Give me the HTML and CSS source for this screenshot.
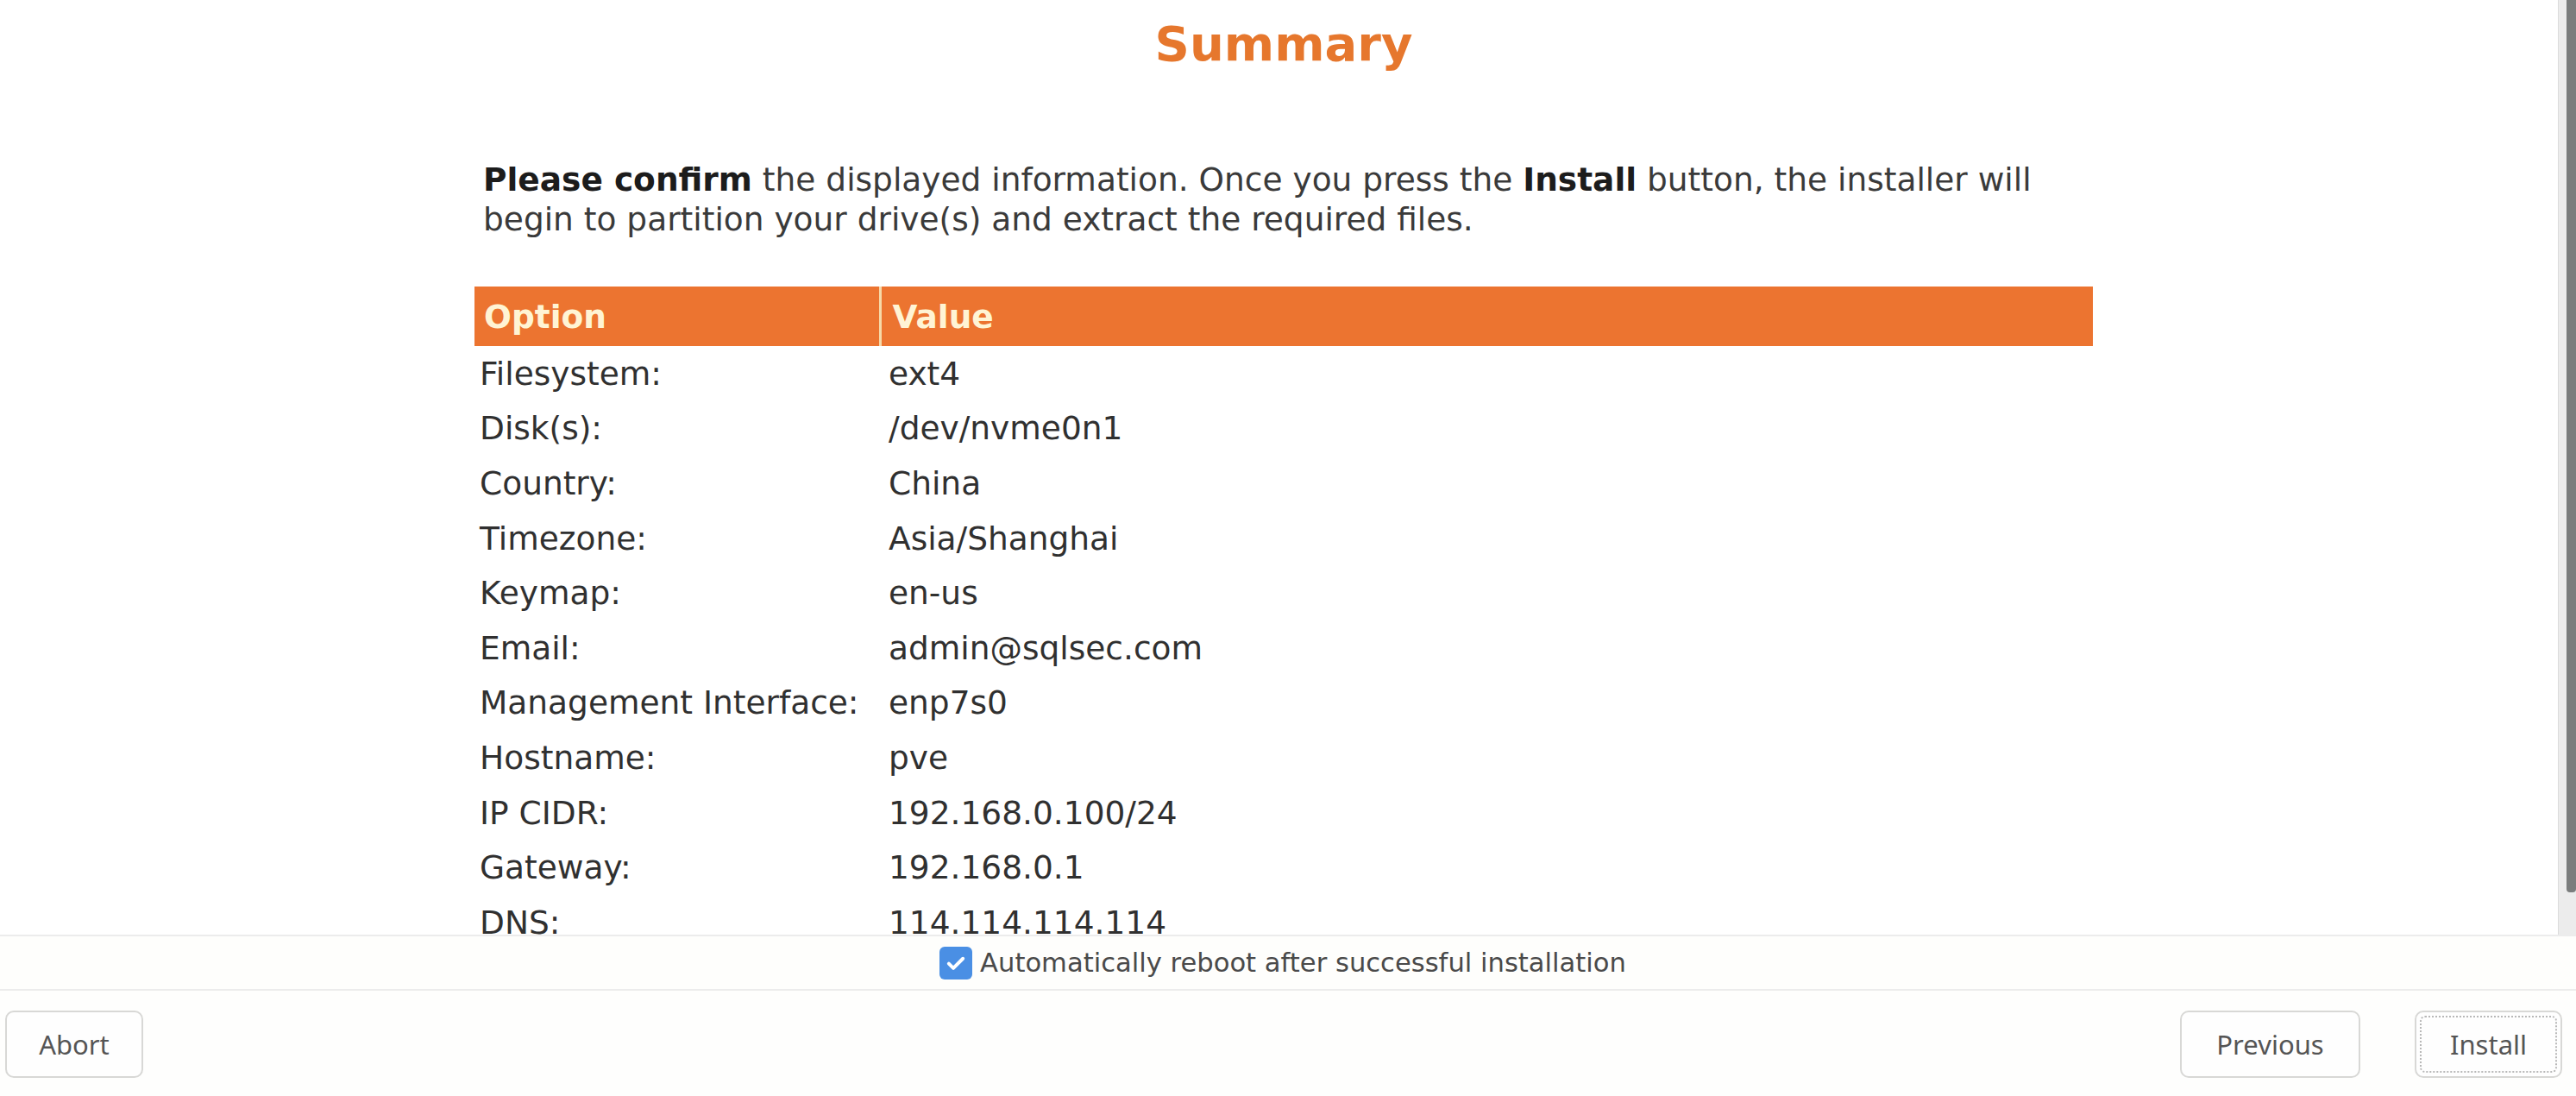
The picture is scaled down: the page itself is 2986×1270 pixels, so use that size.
FILE: index.html
```html
<!DOCTYPE html>
<html lang="en">
<head>
<meta charset="utf-8">
<title>Summary</title>
<link rel="stylesheet" href="styles.css">
</head>
<body>
<div class="page">
  <div class="scroll-area">
    <main class="content">
      <h1 class="title">Summary</h1>
      <div class="inner">
        <p class="intro"><b>Please confirm</b> the displayed information. Once you press the <b>Install</b> button, the installer will begin to partition your drive(s) and extract the required files.</p>
        <table class="summary">
          <thead>
            <tr><th class="col-opt">Option</th><th class="col-val">Value</th></tr>
          </thead>
          <tbody>
            <tr><td>Filesystem:</td><td class="val">ext4</td></tr>
            <tr><td>Disk(s):</td><td class="val">/dev/nvme0n1</td></tr>
            <tr><td>Country:</td><td class="val">China</td></tr>
            <tr><td>Timezone:</td><td class="val">Asia/Shanghai</td></tr>
            <tr><td>Keymap:</td><td class="val">en-us</td></tr>
            <tr><td>Email:</td><td class="val">admin@sqlsec.com</td></tr>
            <tr><td>Management Interface:</td><td class="val">enp7s0</td></tr>
            <tr><td>Hostname:</td><td class="val">pve</td></tr>
            <tr><td>IP CIDR:</td><td class="val">192.168.0.100/24</td></tr>
            <tr><td>Gateway:</td><td class="val">192.168.0.1</td></tr>
            <tr><td>DNS:</td><td class="val">114.114.114.114</td></tr>
          </tbody>
        </table>
      </div>
    </main>
    <div class="scrollbar"><div class="thumb"></div></div>
  </div>
  <div class="check-bar">
    <label class="check">
      <span class="box"><svg viewBox="0 0 24 24" width="28" height="28"><path d="M5 12.5l4.5 4.5L19 7.5" fill="none" stroke="#fff" stroke-width="3.4" stroke-linecap="round" stroke-linejoin="round"/></svg></span>
      <span class="check-label">Automatically reboot after successful installation</span>
    </label>
  </div>
  <div class="button-bar">
    <button class="btn btn-abort">Abort</button>
    <div class="btn-group">
      <button class="btn btn-prev">Previous</button>
      <button class="btn btn-install"><span class="focus">Install</span></button>
    </div>
  </div>
</div>
</body>
</html>
```

FILE: styles.css
```css
* { box-sizing: border-box; }
html, body { margin: 0; padding: 0; background: #ffffff; }
body { font-family: "DejaVu Sans", "Liberation Sans", sans-serif; color: #333333; }

.page {
  width: 2986px;
  height: 1270px;
  display: flex;
  flex-direction: column;
  overflow: hidden;
}

.scroll-area {
  flex: 0 0 1083px;
  display: flex;
  overflow: hidden;
}

.content {
  flex: 1;
  padding-left: 11px;
  overflow: hidden;
}

.title {
  margin: 0;
  padding-top: 16px;
  font-size: 56px;
  line-height: 70px;
  font-weight: bold;
  color: #e6772d;
  text-align: center;
}

.inner {
  width: 1876px;
  margin: 0 auto;
}

.intro {
  margin: 99px 0 0 0;
  padding: 0 10px;
  font-size: 37.5px;
  line-height: 46px;
  color: #3a3a3a;
}
.intro b { color: #1c1c1c; }

.summary {
  margin-top: 55px;
  width: 100%;
  border-collapse: collapse;
  font-size: 37.5px;
}

.summary th {
  background: #ec7430;
  color: #fff4d4;
  font-weight: bold;
  text-align: left;
  height: 69px;
  padding: 0 0 0 11px;
}
.summary th.col-opt { width: 470px; }
.summary th.col-val { border-left: 3px solid #f6d9a8; padding-left: 13px; }

.summary td {
  height: 63.6px;
  padding: 0 0 0 6px;
  color: #303030;
  white-space: nowrap;
}
.summary td.val { padding-left: 10px; }

.scrollbar {
  flex: 0 0 21px;
  background: #ececec;
  border-left: 1px solid #dcdcdc;
  padding-left: 9px;
}
.thumb {
  width: 11px;
  height: 1034px;
  background: #7b7d7d;
  border-radius: 0 0 4px 4px;
}

.check-bar {
  flex: 0 0 65px;
  border-top: 2px solid #ececec;
  border-bottom: 2px solid #ececec;
  background: #fefefc;
  display: flex;
  align-items: center;
  justify-content: center;
  padding-right: 12px;
}

.check {
  display: flex;
  align-items: center;
  gap: 9px;
}
.box {
  width: 38px;
  height: 38px;
  border-radius: 6px;
  background: #4a8fe4;
  display: flex;
  align-items: center;
  justify-content: center;
}
.check-label {
  font-size: 30.6px;
  color: #4a4a4a;
}

.button-bar {
  flex: 1;
  display: flex;
  justify-content: space-between;
  align-items: flex-start;
  padding: 23px 16px 0 6px;
  background: #fefefd;
}

.btn-group { display: flex; gap: 63px; }

.btn {
  height: 78px;
  background: #fefefe;
  border: 2px solid #d8d8d6;
  border-radius: 10px;
  font-family: "Noto Sans", "Open Sans", sans-serif;
  font-size: 31px;
  color: #555555;
  padding: 0;
  cursor: pointer;
}
.btn-abort { width: 160px; }
.btn-prev { width: 209px; }
.btn-install { width: 171px; padding: 4px; }
.btn-install .focus {
  display: flex;
  align-items: center;
  justify-content: center;
  width: 100%;
  height: 100%;
  border: 2px dotted #b8b8b8;
  border-radius: 6px;
}
```
